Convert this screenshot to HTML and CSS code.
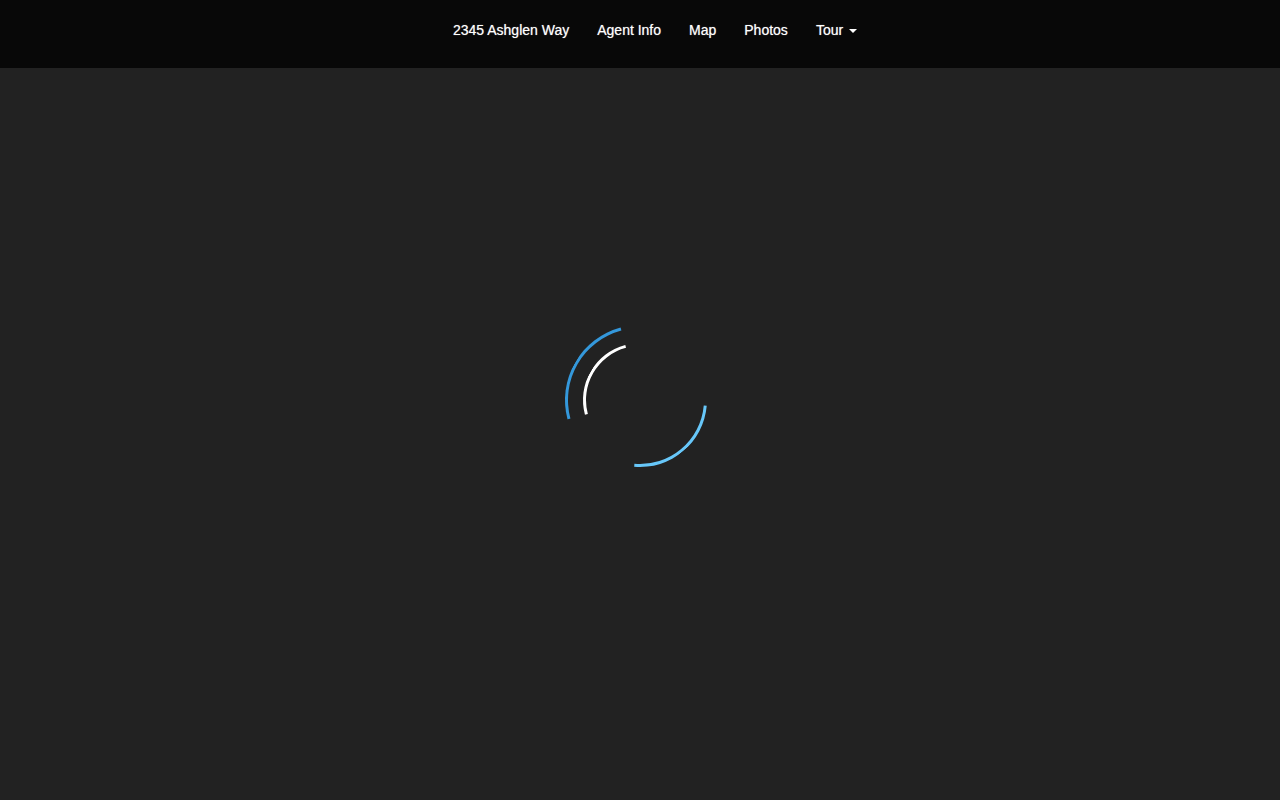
FILE: index.html
```
<!DOCTYPE html>
<html lang="en">
<head>
  <meta charset="UTF-8">
  <meta name="viewport" content="width=device-width, initial-scale=1.0">
  <title>2345 Ashglen Way</title>
  <link rel="stylesheet" href="styles.css">
</head>
<body>

<nav class="navbar">
  <ul class="nav">
    <li><a href="#home">2345 Ashglen Way</a></li>
    <li><a href="#agent">Agent Info</a></li>
    <li><a href="#map">Map</a></li>
    <li><a href="#photos">Photos</a></li>
    <li><a href="#tour">Tour <span class="caret"></span></a></li>
  </ul>
</nav>

<main class="loader-wrapper">
  <div class="loader" role="status" aria-label="Loading">
    <div class="ring ring-outer"></div>
    <div class="ring ring-middle"></div>
    <div class="ring ring-inner"></div>
  </div>
</main>

</body>
</html>
```

FILE: styles.css
```
* {
  box-sizing: border-box;
}
body {
  margin: 0;
  min-height: 100vh;
  font-family: "Helvetica Neue", Helvetica, Arial, "Liberation Sans", sans-serif;
  font-size: 14px;
  line-height: 20px;
  color: #fff;
  background-color: #222;
}
.navbar {
  position: fixed;
  top: 0;
  left: 0;
  right: 0;
  z-index: 10;
  padding: 5px 0 13px;
  background-color: #080808;
}
.nav {
  display: flex;
  justify-content: center;
  margin: 0;
  padding: 0 0 0 30px;
  list-style: none;
}
.nav a {
  display: block;
  padding: 15px 14px;
  color: #fff;
  text-decoration: none;
  text-shadow: 0 0 1px rgba(255, 255, 255, 0.6);
}
.nav a:hover {
  color: #3498db;
}
.caret {
  display: inline-block;
  margin-left: 2px;
  vertical-align: middle;
  border-top: 4px solid;
  border-right: 4px solid transparent;
  border-left: 4px solid transparent;
}

/* loader */
.loader-wrapper {
  display: flex;
  align-items: center;
  justify-content: center;
  min-height: 100vh;
}
.loader {
  position: relative;
  width: 150px;
  height: 150px;
}
.ring {
  position: absolute;
  border: 3px solid transparent;
  border-radius: 50%;
}
.ring-outer {
  inset: 0;
  border-top-color: #3498db;
  transform: rotate(-60deg);
}
.ring-middle {
  inset: 8px;
  border-top-color: #67c7f9;
  transform: rotate(140deg);
}
.ring-inner {
  inset: 18px;
  border-top-color: #fff;
  transform: rotate(-60deg);
}
```
